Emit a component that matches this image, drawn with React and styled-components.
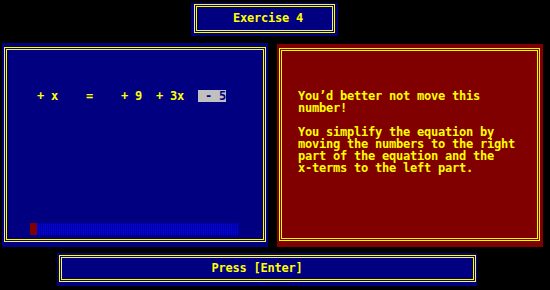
import React from "react";
import styled, { createGlobalStyle } from "styled-components";

const NAVY = "#000080";
const MAROON = "#800000";
const YELLOW = "#ffff00";

const GlobalStyle = createGlobalStyle`
  html, body {
    margin: 0;
    background: #000;
  }
  body {
    font-family: "DejaVu Sans Mono", "Liberation Mono", monospace;
  }
`;

const Screen = styled.div`
  width: 550px;
  height: 290px;
  box-sizing: border-box;
  padding-top: 3px;
  background: #000;
  display: flex;
  flex-direction: column;
  overflow: hidden;
`;

const Box = styled.div`
  box-sizing: border-box;
  background: ${(props) => props.$bg || NAVY};
  width: ${(props) => props.$w}px;
  height: ${(props) => props.$h}px;
  margin-left: ${(props) => props.$left || 0}px;
  margin-top: ${(props) => props.$top || 0}px;
  padding: ${(props) => props.$pad};
  flex-shrink: 0;
`;

const Frame = styled.div`
  box-sizing: border-box;
  height: 100%;
  border: 3px double ${YELLOW};
  display: flex;
  flex-direction: column;
  align-items: ${(props) => (props.$center ? "center" : "stretch")};
  justify-content: ${(props) => (props.$center ? "center" : "flex-start")};
`;

const Mono = styled.div`
  font-weight: bold;
  font-size: 12px;
  letter-spacing: -0.225px;
  line-height: 12px;
  color: ${YELLOW};
  white-space: pre;
`;

const Caption = styled(Mono)`
  padding-left: ${(props) => props.$shiftLeft || 0}px;
  padding-right: ${(props) => props.$shiftRight || 0}px;
  padding-bottom: 1px;
`;

const PanelRow = styled.div`
  display: flex;
  align-items: flex-start;
  gap: 9px;
  margin-top: 7px;
  padding-left: 2px;
`;

const Equation = styled(Mono)`
  margin-top: 40px;
  margin-left: 30px;
`;

const Highlight = styled.span`
  display: inline-block;
  height: 12px;
  vertical-align: top;
  background: #c0c0c0;
  color: ${NAVY};
`;

const Progress = styled.div`
  display: flex;
  margin-top: auto;
  margin-left: 23px;
  margin-bottom: 4px;
  height: 12px;
`;

const Done = styled.div`
  width: ${(props) => props.$cells * 7}px;
  background: ${MAROON};
`;

const Remaining = styled.div`
  width: ${(props) => props.$cells * 7 - 1}px;
  background-color: #0000e0;
  background-image:
    repeating-linear-gradient(0deg, transparent 0 1px, rgba(0, 0, 128, 0.45) 1px 2px),
    repeating-linear-gradient(90deg, #0000ff 0 1px, #000099 1px 2px);
`;

const Message = styled(Mono)`
  margin-top: 39px;
  margin-left: 16px;
`;

const message = `You’d better not move this
number!

You simplify the equation by
moving the numbers to the right
part of the equation and the
x-terms to the left part.`;

export default function App() {
  return (
    <>
      <GlobalStyle />
      <Screen>
        <Box $w={147} $h={33} $left={191} $pad="1px 3px 3px 3px">
          <Frame $center>
            <Caption $shiftLeft={7}>Exercise 4</Caption>
          </Frame>
        </Box>

        <PanelRow>
          <Box $w={266} $h={204} $pad="4px 2px 5px 2px">
            <Frame>
              <Equation>
                {"+ x    =    + 9  + 3x  "}
                <Highlight>{" - 5"}</Highlight>
              </Equation>
              <Progress>
                <Done $cells={1} />
                <Remaining $cells={29} />
              </Progress>
            </Frame>
          </Box>
          <Box $bg={MAROON} $w={266} $h={203} $top={1} $pad="4px 3px 6px 2px">
            <Frame>
              <Message>{message}</Message>
            </Frame>
          </Box>
        </PanelRow>

        <Box $w={420} $h={33} $left={57} $top={6} $pad="2px 1px 4px 2px">
          <Frame $center>
            <Caption $shiftRight={21}>Press [Enter]</Caption>
          </Frame>
        </Box>
      </Screen>
    </>
  );
}
